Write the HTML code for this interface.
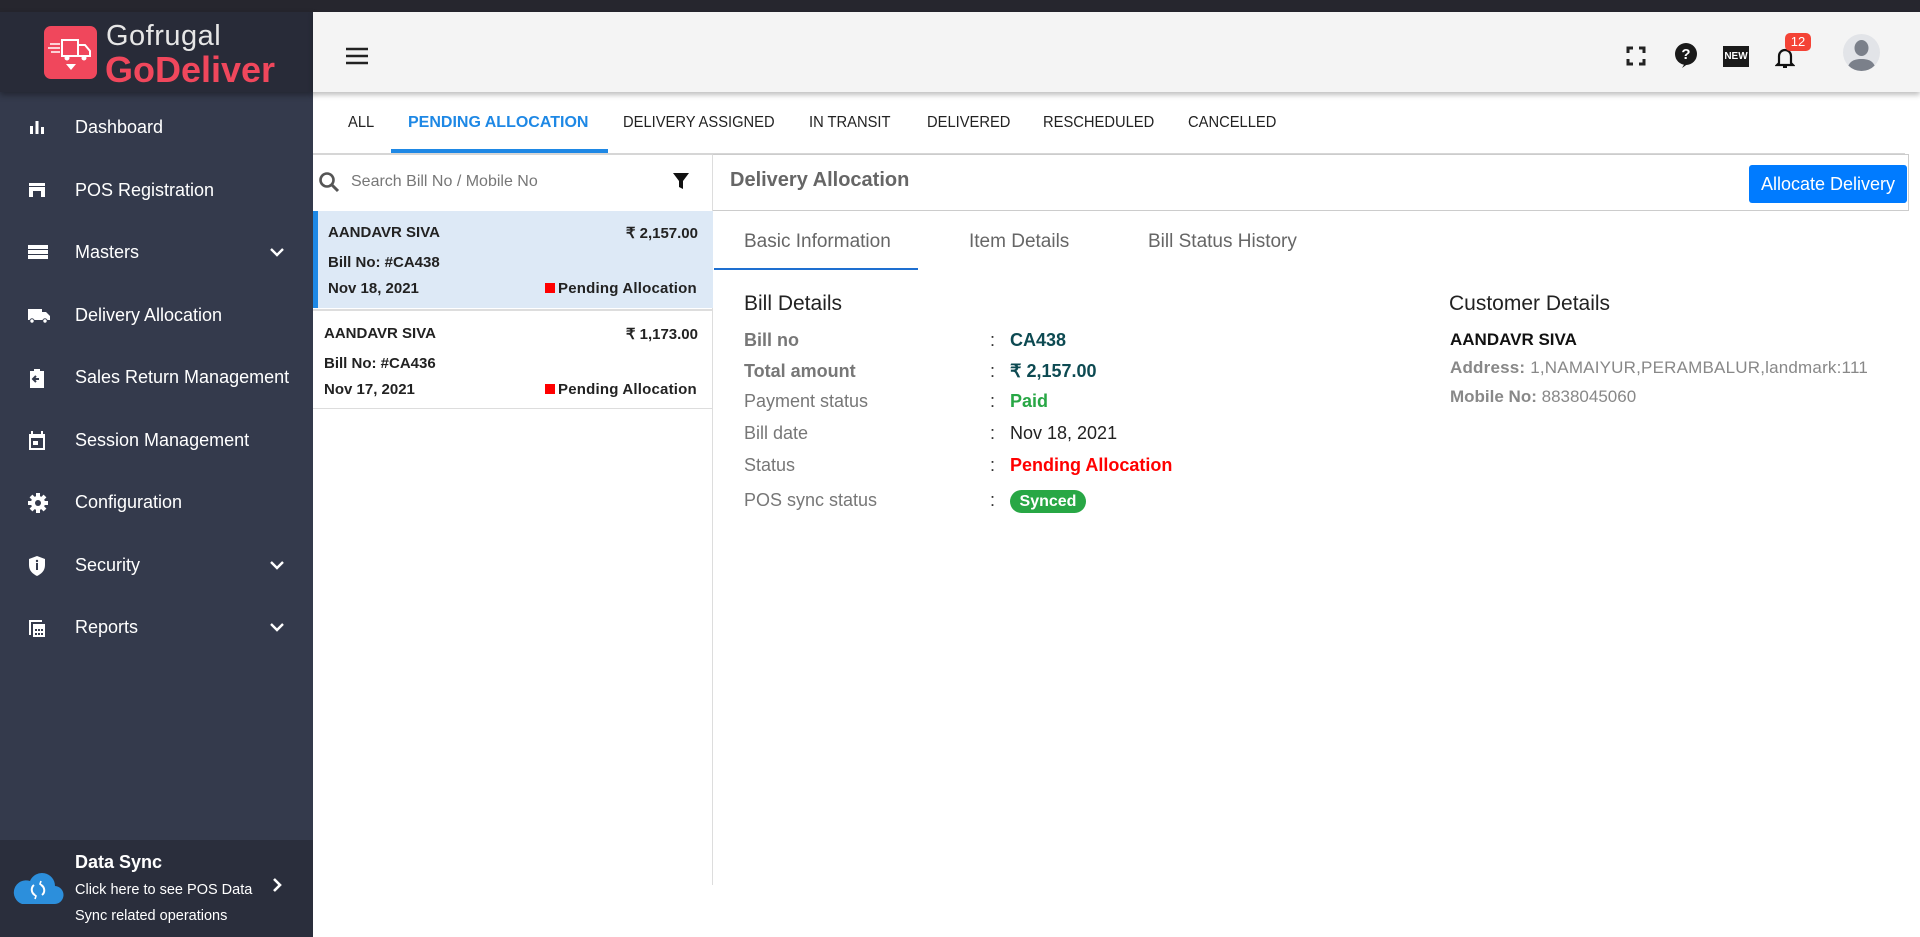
<!DOCTYPE html>
<html><head><meta charset="utf-8"><style>
*{margin:0;padding:0;box-sizing:border-box}
body{width:1920px;height:937px;overflow:hidden;background:#fff;font-family:"Liberation Sans",sans-serif;position:relative}
.a{position:absolute;white-space:nowrap}
#top{left:0;top:0;width:1920px;height:12px;background:#26262e}
#sb{left:0;top:12px;width:313px;height:925px;background:#343a4c}
#logo{left:0;top:12px;width:313px;height:80px;background:#282b38;box-shadow:0 3px 6px rgba(0,0,0,.35)}
.mi{left:0;width:313px;height:40px;color:#fff;font-size:18px;line-height:40px}
.mi .t{position:absolute;left:75px}
.mi svg{position:absolute;left:27px;top:10px}
.mi .ch{position:absolute;left:268px;top:12px}
#ds{left:0;top:840px;width:313px;height:97px;background:#2a2e3c}
#hdr{left:313px;top:12px;width:1607px;height:80px;background:#f4f4f4;box-shadow:0 3px 5px rgba(0,0,0,.25)}
.tab{top:114px;font-size:16px;color:#222;transform:scaleX(.92);transform-origin:left}
.lbl{left:744px;font-size:18px;color:#777}
.col{left:990px;font-size:18px;color:#333}
.val{left:1010px;font-size:18px}
.li{font-size:15px;font-weight:bold;color:#222}
</style></head><body>
<div id="top" class="a"></div>
<div id="sb" class="a"></div>
<div id="logo" class="a">
 <div class="a" style="left:44px;top:14px;width:53px;height:53px;background:#f0475c;border-radius:7px"></div>
 <svg class="a" style="left:46px;top:22px" width="50" height="40" viewBox="0 0 50 40"><path d="M16 6h16v16H16zM32 11h7l5 6v5H32z" fill="none" stroke="#fff" stroke-width="2"/><circle cx="21" cy="24" r="2.5" fill="#fff"/><circle cx="38" cy="24" r="2.5" fill="#fff"/><path d="M4 10h10M2 14h12M5 18h9" stroke="#fff" stroke-width="1.6"/><path d="M20 30l5 6 5-6" fill="#fff"/></svg>
 <div class="a" style="left:106px;top:8px;font-size:29px;color:#e6e6e6;letter-spacing:0.5px">Gofrugal</div>
 <div class="a" style="left:105px;top:37px;font-size:36px;font-weight:bold;color:#f0475c">GoDeliver</div>
</div>
<div class="a mi" style="top:107px"><svg width="20" height="20" viewBox="0 0 20 20"><path d="M3 9h3v8H3zM8.5 4h3v13h-3zM14 10h3v7h-3z" fill="#fff"/></svg><span class="t">Dashboard</span></div>
<div class="a mi" style="top:170px"><svg width="20" height="20" viewBox="0 0 20 20"><path d="M2 3h16v3H2zM2 7h16v10H2z" fill="#fff"/><path d="M6 11h8v6H6z" fill="#343a4c"/></svg><span class="t">POS Registration</span></div>
<div class="a mi" style="top:232px"><svg width="22" height="20" viewBox="0 0 22 20"><path d="M1 3h20v4H1zM1 8h20v4H1zM1 13h20v4H1z" fill="#fff"/></svg><span class="t">Masters</span><svg class="ch" width="18" height="16" viewBox="0 0 18 16"><path d="M3 5l6 6 6-6" fill="none" stroke="#fff" stroke-width="2.4"/></svg></div>
<div class="a mi" style="top:295px"><svg width="24" height="20" viewBox="0 0 24 20"><path d="M1 4h14v11H1zM15 7h4l4 4v4h-8z" fill="#fff"/><circle cx="5" cy="16" r="2.2" fill="#fff" stroke="#343a4c"/><circle cx="18" cy="16" r="2.2" fill="#fff" stroke="#343a4c"/></svg><span class="t">Delivery Allocation</span></div>
<div class="a mi" style="top:357px"><svg width="20" height="22" viewBox="0 0 20 22"><path d="M3 4h14v17H3z" fill="#fff"/><path d="M7 2h6v4H7z" fill="#fff"/><path d="M12 12H7m2-3l-3 3 3 3" stroke="#343a4c" stroke-width="2" fill="none"/></svg><span class="t">Sales Return Management</span></div>
<div class="a mi" style="top:420px"><svg width="20" height="22" viewBox="0 0 20 22"><path d="M2 4h16v16H2z" fill="#fff"/><path d="M5 1v4M15 1v4" stroke="#fff" stroke-width="2"/><path d="M4 8h12v10H4z" fill="#343a4c"/><path d="M6 11h5v4H6z" fill="#fff"/></svg><span class="t">Session Management</span></div>
<div class="a mi" style="top:482px"><svg width="22" height="22" viewBox="0 0 22 22"><circle cx="11" cy="11" r="7" fill="#fff"/><path d="M11 1v20M1 11h20M4 4l14 14M18 4L4 18" stroke="#fff" stroke-width="4"/><circle cx="11" cy="11" r="3" fill="#343a4c"/></svg><span class="t">Configuration</span></div>
<div class="a mi" style="top:545px"><svg width="20" height="22" viewBox="0 0 20 22"><path d="M10 1l8 3v6c0 6-4 9-8 11-4-2-8-5-8-11V4z" fill="#fff"/><path d="M10 8v7" stroke="#343a4c" stroke-width="2"/><circle cx="10" cy="6" r="1.2" fill="#343a4c"/></svg><span class="t">Security</span><svg class="ch" width="18" height="16" viewBox="0 0 18 16"><path d="M3 5l6 6 6-6" fill="none" stroke="#fff" stroke-width="2.4"/></svg></div>
<div class="a mi" style="top:607px"><svg width="20" height="22" viewBox="0 0 20 22"><path d="M2 3h13v2H4v13H2z" fill="#fff"/><path d="M6 7h12v13H6z" fill="#fff"/><path d="M8 12h2v2H8zM11 12h2v2h-2zM14 12h2v2h-2zM8 16h2v2H8zM11 16h2v2h-2zM14 16h2v2h-2z" fill="#343a4c"/></svg><span class="t">Reports</span><svg class="ch" width="18" height="16" viewBox="0 0 18 16"><path d="M3 5l6 6 6-6" fill="none" stroke="#fff" stroke-width="2.4"/></svg></div>
<div id="ds" class="a">
 <svg class="a" style="left:12px;top:30px" width="52" height="36" viewBox="0 0 52 36"><path d="M10 34h32a9 9 0 0 0 1-18A13 13 0 0 0 18 11 10 10 0 0 0 10 34z" fill="#2c8fdc"/><path d="M22 15a6 6 0 0 0 1 10M30 25a6 6 0 0 0-1-10" stroke="#fff" stroke-width="2" fill="none"/><path d="M21 24l3 2-1 3M31 16l-3-2 1-3" stroke="#fff" stroke-width="1.6" fill="none"/></svg>
 <div class="a" style="left:75px;top:12px;font-size:18px;font-weight:bold;color:#fff">Data Sync</div>
 <div class="a" style="left:75px;top:42px;font-size:14.5px;color:#fff">Click here to see POS Data</div>
 <div class="a" style="left:75px;top:68px;font-size:14.5px;color:#fff">Sync related operations</div>
 <svg class="a" style="left:270px;top:36px" width="14" height="18" viewBox="0 0 14 18"><path d="M4 3l6 6-6 6" stroke="#fff" stroke-width="2.6" fill="none"/></svg>
</div>
<div id="hdr" class="a">
 <svg class="a" style="left:32px;top:34px" width="24" height="20" viewBox="0 0 24 20"><path d="M1 3h22M1 10h22M1 17h22" stroke="#222" stroke-width="2.4"/></svg>
 <svg class="a" style="left:1313px;top:34px" width="20" height="20" viewBox="0 0 20 20"><path d="M2 7V2h5M13 2h5v5M18 13v5h-5M7 18H2v-5" stroke="#222" stroke-width="3" fill="none"/></svg>
 <svg class="a" style="left:1360px;top:30px" width="26" height="28" viewBox="0 0 26 28"><circle cx="13" cy="12" r="11" fill="#1a1a1a"/><path d="M9 26l3-5h4z" fill="#1a1a1a"/><text x="13" y="17" font-size="15" font-weight="bold" fill="#fff" text-anchor="middle" font-family="Liberation Sans">?</text></svg>
 <div class="a" style="left:1410px;top:34px;width:26px;height:21px;background:#1a1a1a;color:#fff;font-size:10px;font-weight:bold;line-height:21px;text-align:center">NEW</div>
 <svg class="a" style="left:1462px;top:34px" width="20" height="24" viewBox="0 0 20 24"><path d="M4 17V10a6 6 0 0 1 12 0v7l2 2H2z" fill="none" stroke="#111" stroke-width="2.2"/><path d="M8 21h4" stroke="#111" stroke-width="2"/></svg>
 <div class="a" style="left:1472px;top:21px;width:26px;height:18px;background:#f44336;color:#fff;border-radius:5px;font-size:13px;text-align:center;line-height:18px">12</div>
 <div class="a" style="left:1530px;top:22px;width:37px;height:37px;border-radius:50%;background:#e2e4e8;overflow:hidden"><svg width="37" height="37" viewBox="0 0 37 37"><ellipse cx="18.5" cy="14" rx="7" ry="8" fill="#7b808a"/><path d="M4 37c1-9 6-12 14.5-12S32 28 33 37z" fill="#7b808a"/></svg></div>
</div>
<div class="a tab" style="left:348px">ALL</div>
<div class="a tab" style="left:408px;color:#1e88e5;font-weight:bold;transform:none;font-size:16px">PENDING ALLOCATION</div>
<div class="a tab" style="left:623px">DELIVERY ASSIGNED</div>
<div class="a tab" style="left:809px">IN TRANSIT</div>
<div class="a tab" style="left:927px">DELIVERED</div>
<div class="a tab" style="left:1043px">RESCHEDULED</div>
<div class="a tab" style="left:1188px">CANCELLED</div>
<div class="a" style="left:313px;top:153px;width:1592px;height:2px;background:#d6d6d6"></div>
<div class="a" style="left:391px;top:149px;width:217px;height:4px;background:#1e88e5"></div>
<!-- list -->
<div class="a" style="left:313px;top:155px;width:400px;height:730px;border-right:1px solid #ddd"></div>
<svg class="a" style="left:318px;top:171px" width="22" height="22" viewBox="0 0 22 22"><circle cx="9" cy="9" r="6.5" stroke="#555" stroke-width="2.6" fill="none"/><path d="M14 14l6 6" stroke="#555" stroke-width="3"/></svg>
<div class="a" style="left:351px;top:173px;font-size:16px;color:#777">Search Bill No / Mobile No</div>
<svg class="a" style="left:672px;top:172px" width="18" height="18" viewBox="0 0 18 18"><path d="M1 1h16l-6 8v8l-4-2V9z" fill="#111"/></svg>
<div class="a" style="left:313px;top:211px;width:400px;height:1px;background:#ddd"></div>
<div class="a" style="left:313px;top:211px;width:400px;height:97px;background:#dde9f6;border-left:5px solid #1e88e5"></div>
<div class="a li" style="left:328px;top:224px">AANDAVR SIVA</div>
<div class="a li" style="left:623px;top:224px;width:75px;text-align:right">₹ 2,157.00</div>
<div class="a li" style="left:328px;top:254px">Bill No: #CA438</div>
<div class="a li" style="left:328px;top:280px">Nov 18, 2021</div>
<div class="a" style="left:545px;top:283px;width:10px;height:10px;background:#f00"></div>
<div class="a li" style="left:558px;top:280px;letter-spacing:0.2px">Pending Allocation</div>
<div class="a" style="left:313px;top:309px;width:400px;height:2px;background:#ddd"></div>
<div class="a li" style="left:324px;top:325px">AANDAVR SIVA</div>
<div class="a li" style="left:623px;top:325px;width:75px;text-align:right">₹ 1,173.00</div>
<div class="a li" style="left:324px;top:355px">Bill No: #CA436</div>
<div class="a li" style="left:324px;top:381px">Nov 17, 2021</div>
<div class="a" style="left:545px;top:384px;width:10px;height:10px;background:#f00"></div>
<div class="a li" style="left:558px;top:381px;letter-spacing:0.2px">Pending Allocation</div>
<div class="a" style="left:313px;top:408px;width:400px;height:1px;background:#ddd"></div>
<!-- detail -->
<div class="a" style="left:713px;top:154px;width:1196px;height:57px;border:1px solid #ccc;border-left:none"></div>
<div class="a" style="left:730px;top:169px;font-size:20px;font-weight:bold;color:#666">Delivery Allocation</div>
<div class="a" style="left:1749px;top:165px;width:158px;height:38px;background:#007bff;border-radius:3px;color:#fff;font-size:18px;line-height:38px;text-align:center">Allocate Delivery</div>
<div class="a" style="left:744px;top:231px;font-size:19px;color:#666">Basic Information</div>
<div class="a" style="left:969px;top:231px;font-size:19px;color:#666">Item Details</div>
<div class="a" style="left:1148px;top:231px;font-size:19px;color:#666">Bill Status History</div>
<div class="a" style="left:714px;top:268px;width:204px;height:2px;background:#1e6fd0"></div>
<div class="a" style="left:744px;top:292px;font-size:21px;color:#222">Bill Details</div>
<div class="a lbl" style="top:330px;font-weight:bold">Bill no</div><div class="a col" style="top:330px">:</div><div class="a val" style="top:330px;font-weight:bold;color:#0d4a52">CA438</div>
<div class="a lbl" style="top:361px;font-weight:bold">Total amount</div><div class="a col" style="top:361px">:</div><div class="a val" style="top:361px;font-weight:bold;color:#0d4a52">₹ 2,157.00</div>
<div class="a lbl" style="top:391px">Payment status</div><div class="a col" style="top:391px">:</div><div class="a val" style="top:391px;font-weight:bold;color:#28a745">Paid</div>
<div class="a lbl" style="top:423px">Bill date</div><div class="a col" style="top:423px">:</div><div class="a val" style="top:423px;color:#222">Nov 18, 2021</div>
<div class="a lbl" style="top:455px">Status</div><div class="a col" style="top:455px">:</div><div class="a val" style="top:455px;font-weight:bold;color:#f00">Pending Allocation</div>
<div class="a lbl" style="top:490px">POS sync status</div><div class="a col" style="top:490px">:</div>
<div class="a" style="left:1010px;top:490px;width:76px;height:23px;border-radius:12px;background:#28a745;color:#fff;font-size:16px;font-weight:bold;text-align:center;line-height:23px">Synced</div>
<div class="a" style="left:1449px;top:292px;font-size:21px;color:#222">Customer Details</div>
<div class="a" style="left:1450px;top:330px;font-size:17px;font-weight:bold;color:#111">AANDAVR SIVA</div>
<div class="a" style="left:1450px;top:358px;font-size:17px;color:#888;letter-spacing:0.2px"><b>Address:</b> 1,NAMAIYUR,PERAMBALUR,landmark:111</div>
<div class="a" style="left:1450px;top:387px;font-size:17px;color:#888"><b>Mobile No:</b> 8838045060</div>
</body></html>
